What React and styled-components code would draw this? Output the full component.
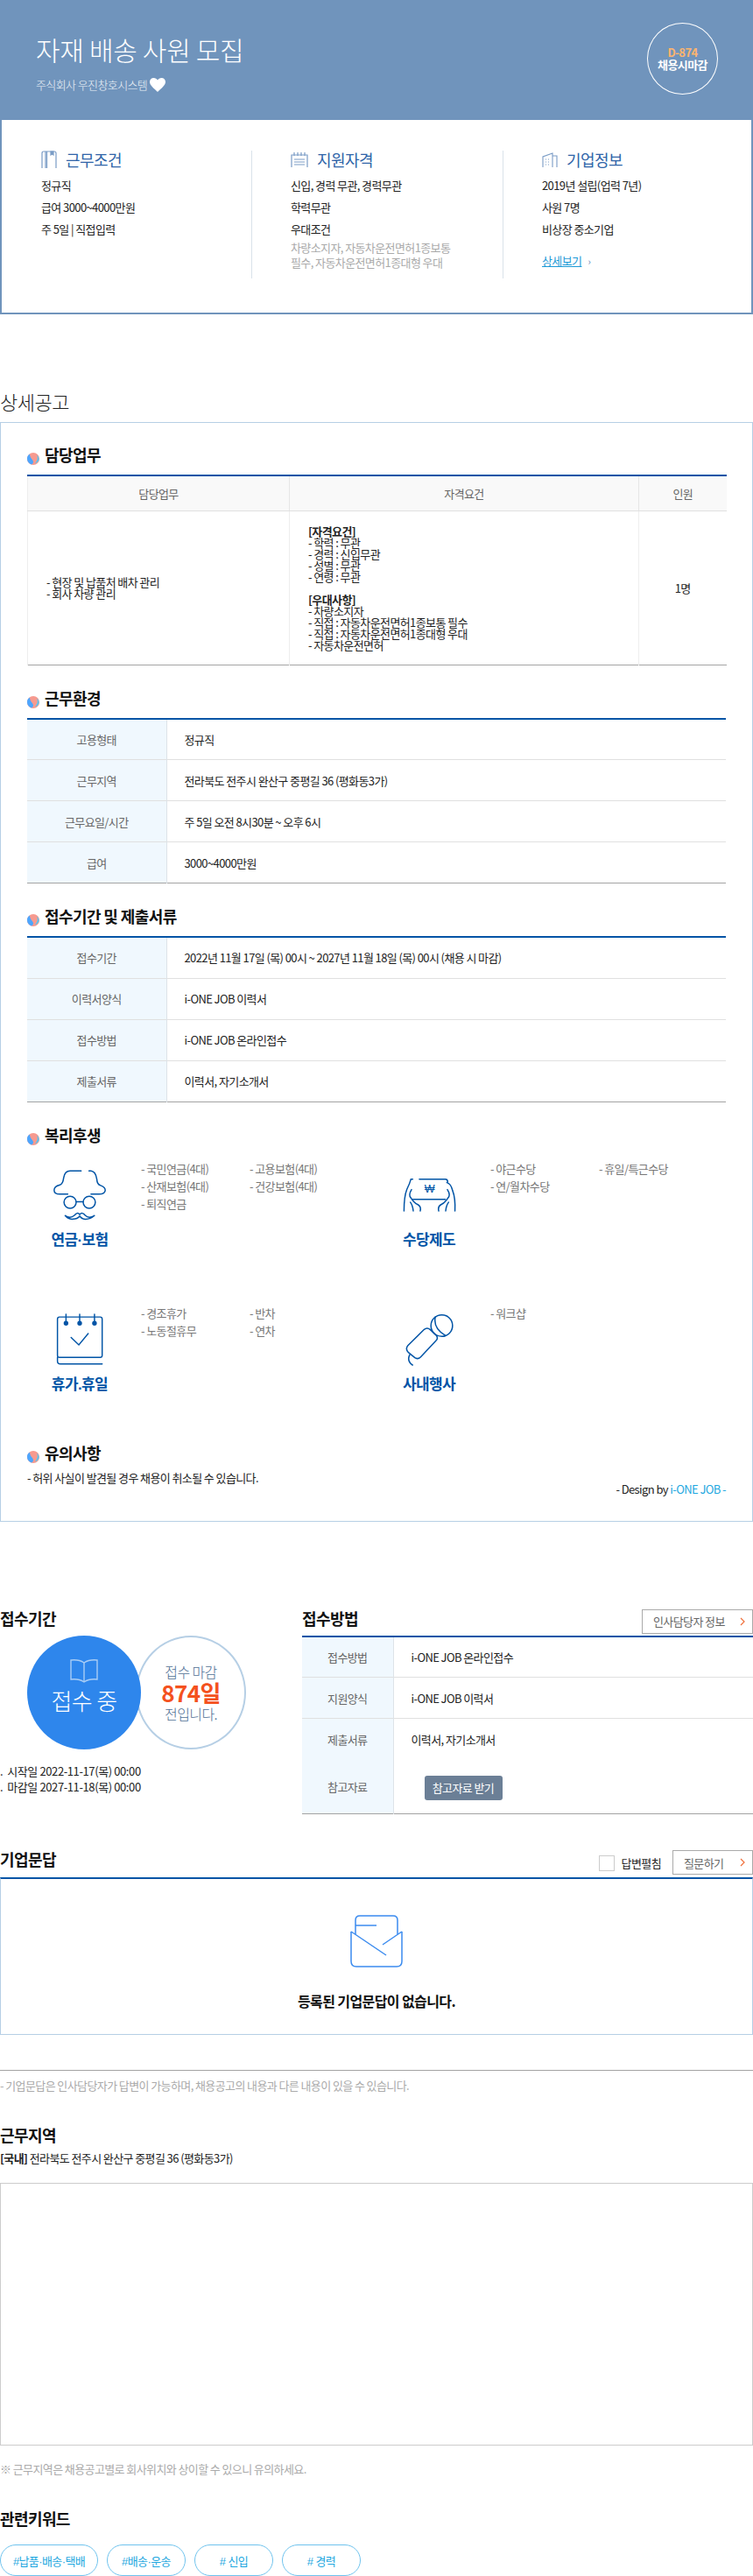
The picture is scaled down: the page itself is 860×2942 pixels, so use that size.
import React from 'react'
import styled, { createGlobalStyle } from 'styled-components'

const GlobalStyle = createGlobalStyle`
    * { box-sizing: border-box; }
    body {
        margin: 0;
        background: #fff;
        color: #222;
        font-family: "Noto Sans CJK KR", "Noto Sans", sans-serif;
        font-size: 13px;
        letter-spacing: -0.6px;
    }
`

const Page = styled.div`
    width: 860px;
    padding-bottom: 1px;
`

/* top banner */
const Banner = styled.div`
    height: 137px;
    background: #7094bc;
    color: #fff;
    padding: 38px 40px 0 41px;
    display: flex;
    justify-content: space-between;
    align-items: flex-start;
`

const Title = styled.h1`
    margin: 0;
    font-size: 30px;
    line-height: 36px;
    font-weight: 300;
    letter-spacing: -0.3px;
`

const Company = styled.div`
    margin-top: 13px;
    display: flex;
    align-items: center;
    gap: 3px;
    font-size: 13px;
    line-height: 20px;
    color: #eef3f8;
    font-weight: 300;
`

const Badge = styled.div`
    width: 81px;
    height: 82px;
    margin-top: -12px;
    border: 1px solid #fff;
    border-radius: 50%;
    display: flex;
    flex-direction: column;
    align-items: center;
    justify-content: center;
    font-size: 13px;
    line-height: 14px;
    font-weight: 700;
`

const BadgeDay = styled.span`
    color: #fdb46e;
`

/* summary card */
const Summary = styled.div`
    height: 222px;
    border: 2px solid #7094bc;
    border-top: 0;
    padding-top: 35px;
    display: grid;
    grid-template-columns: 285px 287px 1fr;
`

const SummaryCol = styled.div`
    height: 146px;
    padding-left: ${p => (p.$first ? '45px' : '44px')};
    border-left: ${p => (p.$first ? '0' : '1px solid #d9e2ea')};
`

const SummaryHead = styled.h3`
    margin: 0 0 7px;
    display: flex;
    align-items: center;
    gap: 10px;
    height: 20px;
    font-size: 18px;
    line-height: 20px;
    font-weight: 400;
    color: #2f64a8;
`

const SummaryRow = styled.div`
    font-size: 13px;
    line-height: 25px;
`

const SummaryGray = styled.div`
    font-size: 13px;
    line-height: 17px;
    color: #aaa;
`

const MoreLink = styled.a`
    display: inline-block;
    margin-top: 14px;
    font-size: 13px;
    line-height: 20px;
    color: #1d9ad6;
    text-decoration: underline;
`

const MoreArrow = styled.span`
    margin-left: 7px;
    color: #5b86b5;
    font-size: 11px;
`

/* detail panel */
const PageTitle = styled.h2`
    margin: 84px 0 9px;
    font-size: 22px;
    line-height: 30px;
    font-weight: 300;
    letter-spacing: -0.5px;
`

const Panel = styled.div`
    border: 1px solid #b6cfe5;
    padding: 23px 30px 28px;
`

const SectionHead = styled.h3`
    margin: ${p => (p.$first ? '0' : '24px')} 0 ${p => p.$mb || '10px'};
    display: flex;
    align-items: flex-end;
    gap: 6px;
    font-size: 18px;
    line-height: 26px;
    font-weight: 700;
    color: #111;
`

const PlainHead = styled.h3`
    margin: 0;
    font-size: 18px;
    line-height: 26px;
    font-weight: 700;
    color: #111;
`

const Table = styled.table`
    width: 100%;
    table-layout: fixed;
    border-collapse: collapse;
    border-top: 2px solid #0054a6;
    border-bottom: 1px solid #a3a3a3;
`

const Th = styled.th`
    width: ${p => p.$w || 'auto'};
    height: 40px;
    padding: 0;
    background: #f9f9f9;
    border-bottom: 1px solid #e0e0e0;
    border-left: ${p => (p.$first ? '1px solid #eee' : '1px solid #e6e6e6')};
    font-size: 13px;
    font-weight: 400;
    color: #666;
`

const Td = styled.td`
    height: 176px;
    padding: 0 0 0 ${p => p.$pad || '21px'};
    border-left: 1px solid #eee;
    font-size: 13px;
    line-height: 13px;
    text-align: ${p => p.$align || 'left'};
    white-space: pre-line;
`

const Strong = styled.strong`
    font-weight: 700;
`

const Row = styled.tr`
    height: ${p => p.$h || '47px'};
    & + & th, & + & td { border-top: 1px solid #e0e0e0; }
`

const Label = styled.th`
    width: ${p => p.$w || '159px'};
    padding: 0;
    background: #f0f8fe;
    border-right: 1px solid #dde3e8;
    font-size: 13px;
    font-weight: 400;
    color: #666;
`

const Value = styled.td`
    padding: 0 0 0 20px;
    font-size: 13px;
`

/* welfare */
const WelfareGrid = styled.div`
    margin-top: 16px;
    display: grid;
    grid-template-columns: 399px 399px;
    grid-auto-rows: 156px;
    row-gap: 9px;
`

const WelfareCell = styled.div`
    display: flex;
`

const WelfareSide = styled.div`
    width: 120px;
    flex: none;
`

const WelfareIcon = styled.div`
    height: 80px;
    display: flex;
    align-items: center;
    justify-content: center;
    color: #0054a6;
`

const WelfareName = styled.div`
    text-align: center;
    font-family: "Liberation Sans", "Noto Sans CJK KR", sans-serif;
    font-size: 17px;
    line-height: 24px;
    font-weight: 700;
    color: #0054a6;
`

const WelfareList = styled.ul`
    margin: 0 0 0 10px;
    padding: 0;
    list-style: none;
    display: grid;
    grid-template-columns: 124px 124px;
    grid-auto-rows: 20px;
    font-size: 13px;
    line-height: 20px;
    color: #777;
`

const NoteRow = styled.div`
    display: flex;
    justify-content: space-between;
    height: 29px;
`

const Note = styled.div`
    font-size: 13px;
    line-height: 16px;
`

const Credit = styled.div`
    align-self: flex-end;
    font-size: 13px;
    line-height: 16px;
`

const CreditMark = styled.span`
    color: #1ea7e0;
`

/* period + method */
const Split = styled.div`
    margin-top: 97px;
    display: flex;
`

const SplitLeft = styled.div`
    width: 345px;
    flex: none;
`

const SplitRight = styled.div`
    flex: 1;
`

const HeadBar = styled.div`
    height: 33px;
    display: flex;
    justify-content: space-between;
    align-items: flex-start;
`

const OutlineBtn = styled.button`
    width: ${p => p.$w};
    height: 28px;
    margin-top: 3px;
    padding: 0 8px 0 12px;
    display: flex;
    align-items: center;
    justify-content: space-between;
    background: #fff;
    border: 1px solid #aaa;
    font: inherit;
    font-size: 13px;
    letter-spacing: -0.6px;
    color: #666;
`

const Circles = styled.div`
    margin-left: 31px;
    display: flex;
`

const BlueCircle = styled.div`
    position: relative;
    z-index: 1;
    width: 130px;
    height: 130px;
    border-radius: 50%;
    background: #2e86ec;
    color: #fff;
    display: flex;
    flex-direction: column;
    align-items: center;
    padding-top: 27px;
    font-size: 26px;
    line-height: 36px;
    font-weight: 300;
`

const RingCircle = styled.div`
    width: 126px;
    height: 130px;
    margin-left: -6px;
    border: 2px solid #b6cfe5;
    border-radius: 50%;
    display: flex;
    flex-direction: column;
    align-items: center;
    justify-content: center;
    font-size: 16px;
    line-height: 22px;
    font-weight: 300;
    color: #4f6f95;
`

const DayCount = styled.div`
    font-size: 26px;
    line-height: 26px;
    font-weight: 700;
    color: #f4511e;
`

const Dates = styled.ul`
    margin: 16px 0 0;
    padding: 0;
    list-style: none;
    font-size: 13px;
    line-height: 18px;
    letter-spacing: -0.4px;
`

const DownloadBtn = styled.button`
    width: 89px;
    height: 28px;
    margin: 3px 0 0 15px;
    display: block;
    background: #6b7f96;
    border: 0;
    border-radius: 3px;
    color: #fff;
    font: inherit;
    font-size: 13px;
    letter-spacing: -0.6px;
    padding: 0;
`

/* q&a */
const QnaBar = styled.div`
    margin-top: 38px;
    height: 34px;
    display: flex;
    justify-content: space-between;
    align-items: flex-start;
`

const QnaTools = styled.div`
    display: flex;
    align-items: flex-start;
`

const CheckBox = styled.span`
    width: 18px;
    height: 18px;
    margin-top: 9px;
    border: 1px solid #ccc;
`

const CheckLabel = styled.span`
    margin: 8px 13px 0 8px;
    font-size: 13px;
    line-height: 20px;
`

const QnaBox = styled.div`
    height: 180px;
    border-top: 2px solid #0054a6;
    border-left: 1px solid #b6cfe5;
    border-right: 1px solid #b6cfe5;
    border-bottom: 1px solid #b6cfe5;
    padding-top: 41px;
    display: flex;
    flex-direction: column;
    align-items: center;
`

const EmptyText = styled.div`
    margin-top: 26px;
    font-size: 16px;
    line-height: 24px;
    font-weight: 700;
    color: #111;
`

const Divider = styled.hr`
    margin: 40px 0 0;
    border: 0;
    border-top: 1px solid #a3a3a3;
`

const GrayNote = styled.div`
    margin-top: ${p => p.$mt || '7px'};
    font-size: 13px;
    line-height: 20px;
    color: #aaa;
`

const LocationHead = styled(PlainHead)`
    margin-top: 33px;
`

const Address = styled.div`
    margin-top: 5px;
    font-size: 13px;
    line-height: 18px;
`

const MapBox = styled.div`
    height: 300px;
    margin-top: 19px;
    border: 1px solid #ccc;
`

const TagList = styled.div`
    margin-top: 17px;
    display: flex;
    gap: 10px;
`

const Tag = styled.a`
    width: ${p => p.$w || '90px'};
    height: 36px;
    border: 1px solid #6fc3ee;
    border-radius: 18px;
    display: flex;
    align-items: center;
    justify-content: center;
    font-family: "Liberation Sans", "Noto Sans CJK KR", sans-serif;
    font-size: 13px;
    color: #1ea7e0;
`

const DotSvg = styled.svg`
    flex: none;
    margin-bottom: 1px;
`

const BookSvg = styled.svg`
    flex: none;
    margin-bottom: 2px;
`

const Heart = () => (
    <svg width="18" height="16" viewBox="0 0 18 16">
        <path fill="#fff" d="M9 16C5 12 0 8.500 0 4.500 0 1.800 2 0 4.500 0 6.500 0 8 1 9 2.500 10 1 11.500 0 13.500 0 16 0 18 1.800 18 4.500 18 8.500 13 12 9 16Z" />
    </svg>
)

const Dot = () => (
    <DotSvg width="14" height="14" viewBox="0 0 14 14">
        <circle cx="7" cy="7" r="7" fill="#f79a8f" />
        <path fill="#4da6ff" d="M3 1.500C0.500 3 0 5 0 7c0 3 2 5.500 5 6.500 1-.5 2-1.500 2-3 0-2-2-3-3-5C3.500 4 3 3 3 1.500Z" />
        <path fill="#58c4f0" d="M11 2.500c1 2 1 4.500 0 6.500l-2 3.500c2-1 3.500-2 4.500-4C14 6 13 4 11 2.500Z" />
    </DotSvg>
)

const DoorIcon = () => (
    <svg width="18" height="20" viewBox="0 0 18 20" fill="none" stroke="#7a9cc6" strokeWidth="1.200">
        <path d="M1 20V3q0-2 2-2h12q2 0 2 2v17" />
        <path d="M5 1v19M6.500 1v19" />
        <path d="M11 1h3v4l-1.500-1-1.500 1z" fill="#7a9cc6" />
    </svg>
)

const NoteIcon = () => (
    <svg width="20" height="17" viewBox="0 0 20 17" fill="none" stroke="#7a9cc6" strokeWidth="1.200">
        <path d="M1 17V3h18v14" />
        <path d="M4 0v4M8 0v4M12 0v4M16 0v4" />
        <path d="M4 8h12M4 11h12M4 14h12" />
    </svg>
)

const BuildingIcon = () => (
    <svg width="18" height="17" viewBox="0 0 18 17" fill="none" stroke="#7a9cc6" strokeWidth="1.100">
        <path d="M1 17V5l11-4v16" />
        <path d="M12 4h5v13" />
        <path d="M4 8h1M7 8h1M4 11h1M7 11h1M4 14h1M7 14h1" />
    </svg>
)

const HatIcon = () => (
    <svg width="62" height="59" viewBox="120 105 186 178" fill="none" stroke="currentColor" strokeWidth="4.500" strokeLinecap="round">
        <path d="M218 112H180Q162 112 158 135 155 158 145 160 125 165 125 178 125 192 145 192H172" />
        <path d="M245 112H252Q268 114 272 140 273 158 285 162 302 168 301 180 298 192 280 192H252" />
        <circle cx="180" cy="220" r="21" />
        <circle cx="246" cy="220" r="21" />
        <path d="M201 218H225" />
        <path d="M162 265Q180 278 195 265 205 252 213 262 222 252 232 265 245 278 265 265 248 280 228 278 218 275 213 268 205 278 190 278 175 280 162 265Z" />
    </svg>
)

const HandsIcon = () => (
    <svg width="61" height="39" viewBox="58 105 184 118" fill="none" stroke="currentColor" strokeWidth="4.500" strokeLinecap="round">
        <path d="M115 110H205Q213 110 213 120" />
        <path d="M92 180H205" />
        <path d="M92 110H86Q82 125 72 145 62 170 62 220" />
        <path d="M210 122 Q224 125 230 150 240 175 238 220" />
        <path d="M88 146 Q76 165 86 175 96 192 110 198 122 205 118 220 M94 220 Q92 200 84 190" />
        <path d="M212 146 Q224 165 214 175 204 192 190 198 178 205 182 220 M206 220 Q208 200 216 190" />
        <text x="150" y="157" textAnchor="middle" fontSize="38" fill="currentColor" stroke="none" fontFamily="Liberation Sans, sans-serif">₩</text>
    </svg>
)

const CalendarIcon = () => (
    <svg width="54" height="59" viewBox="100 58 166 180" fill="none" stroke="currentColor" strokeWidth="4.500" strokeLinecap="round">
        <rect x="105" y="70" width="157" height="142" rx="7" />
        <path d="M105 212V225Q105 235 115 235H262" />
        <path d="M135 60V92M183 60V92M235 60V92" />
        <circle cx="135" cy="92" r="6" fill="currentColor" />
        <circle cx="183" cy="92" r="6" fill="currentColor" />
        <circle cx="235" cy="92" r="6" fill="currentColor" />
        <path d="M153 142 180 168 213 128" />
    </svg>
)

const MicIcon = () => (
    <svg width="57" height="60" viewBox="65 58 170 180" fill="none" stroke="currentColor" strokeWidth="4.500" strokeLinecap="round">
        <circle cx="192" cy="100" r="37" />
        <path d="M170 70Q162 110 205 134" />
        <path d="M132 113Q142 105 152 113L172 132Q182 142 172 152L120 207Q110 217 100 210L78 192Q66 180 76 168Z" />
        <path d="M82 200Q72 222 92 235" />
    </svg>
)

const BookIcon = () => (
    <BookSvg width="32" height="27" viewBox="0 0 32 27" fill="none" stroke="#a9cdf5" strokeWidth="1.400">
        <path d="M16 4Q10 0 1 1V23Q10 22 16 26Q22 22 31 23V1Q22 0 16 4Z" />
        <path d="M16 4V26" />
    </BookSvg>
)

const LetterIcon = () => (
    <svg width="60" height="60" viewBox="0 0 60 60" fill="none" stroke="#3b8bef" strokeWidth="1.500">
        <path d="M6 22V6Q6 1 11 1H49Q54 1 54 6V22" />
        <path d="M6 12H30" />
        <path d="M1 19V53Q1 59 7 59H53Q59 59 59 53V19" />
        <path d="M1 19 41 46" />
        <path d="M59 19 37 34" />
    </svg>
)

const Chevron = () => (
    <svg width="6" height="10" viewBox="0 0 6 10" fill="none" stroke="#f0703c" strokeWidth="1.200">
        <path d="M1 1l4 4-4 4" />
    </svg>
)

const envRows = [
    ['고용형태', '정규직'],
    ['근무지역', '전라북도 전주시 완산구 중평길 36 (평화동3가)'],
    ['근무요일/시간', '주 5일 오전 8시30분 ~ 오후 6시'],
    ['급여', '3000~4000만원'],
]

const docRows = [
    ['접수기간', '2022년 11월 17일 (목) 00시 ~ 2027년 11월 18일 (목) 00시 (채용 시 마감)'],
    ['이력서양식', 'i-ONE JOB 이력서'],
    ['접수방법', 'i-ONE JOB 온라인접수'],
    ['제출서류', '이력서, 자기소개서'],
]

const welfare = [
    { name: '연금·보험', Icon: HatIcon, items: ['국민연금(4대)', '고용보험(4대)', '산재보험(4대)', '건강보험(4대)', '퇴직연금'] },
    { name: '수당제도', Icon: HandsIcon, items: ['야근수당', '휴일/특근수당', '연/월차수당'] },
    { name: '휴가.휴일', Icon: CalendarIcon, items: ['경조휴가', '반차', '노동절휴무', '연차'] },
    { name: '사내행사', Icon: MicIcon, items: ['워크샵'] },
]

const InfoTable = ({ rows }) => (
    <Table>
        <tbody>
            {rows.map(([label, value]) => (
                <Row key={label}>
                    <Label>{label}</Label>
                    <Value>{value}</Value>
                </Row>
            ))}
        </tbody>
    </Table>
)

const App = () => {
    return (
        <Page>
            <GlobalStyle />
            <Banner>
                <div>
                    <Title>자재 배송 사원 모집</Title>
                    <Company>주식회사 우진창호시스템 <Heart /></Company>
                </div>
                <Badge>
                    <BadgeDay>D-874</BadgeDay>
                    <span>채용시마감</span>
                </Badge>
            </Banner>
            <Summary>
                <SummaryCol $first>
                    <SummaryHead><DoorIcon />근무조건</SummaryHead>
                    <SummaryRow>정규직</SummaryRow>
                    <SummaryRow>급여 3000~4000만원</SummaryRow>
                    <SummaryRow>주 5일 | 직접입력</SummaryRow>
                </SummaryCol>
                <SummaryCol>
                    <SummaryHead><NoteIcon />지원자격</SummaryHead>
                    <SummaryRow>신입, 경력 무관, 경력무관</SummaryRow>
                    <SummaryRow>학력무관</SummaryRow>
                    <SummaryRow>우대조건</SummaryRow>
                    <SummaryGray>차량소지자, 자동차운전면허1종보통</SummaryGray>
                    <SummaryGray>필수, 자동차운전면허1종대형 우대</SummaryGray>
                </SummaryCol>
                <SummaryCol>
                    <SummaryHead><BuildingIcon />기업정보</SummaryHead>
                    <SummaryRow>2019년 설립(업력 7년)</SummaryRow>
                    <SummaryRow>사원 7명</SummaryRow>
                    <SummaryRow>비상장 중소기업</SummaryRow>
                    <MoreLink>상세보기</MoreLink><MoreArrow>›</MoreArrow>
                </SummaryCol>
            </Summary>

            <PageTitle>상세공고</PageTitle>
            <Panel>
                <SectionHead $first><Dot />담당업무</SectionHead>
                <Table>
                    <thead>
                        <tr>
                            <Th $first $w="299px">담당업무</Th>
                            <Th $w="399px">자격요건</Th>
                            <Th $w="100px">인원</Th>
                        </tr>
                    </thead>
                    <tbody>
                        <tr>
                            <Td>{'- 현장 및 납품처 배차 관리\n- 회사 차량 관리'}</Td>
                            <Td>
                                <Strong>[자격요건]</Strong>
                                {'\n- 학력 : 무관\n- 경력 : 신입무관\n- 성별 : 무관\n- 연령 : 무관\n\n'}
                                <Strong>[우대사항]</Strong>
                                {'\n- 차량소지자\n- 직접 : 자동차운전면허1종보통 필수\n- 직접 : 자동차운전면허1종대형 우대\n- 자동차운전면허'}
                            </Td>
                            <Td $align="center" $pad="0">1명</Td>
                        </tr>
                    </tbody>
                </Table>

                <SectionHead><Dot />근무환경</SectionHead>
                <InfoTable rows={envRows} />

                <SectionHead><Dot />접수기간 및 제출서류</SectionHead>
                <InfoTable rows={docRows} />

                <SectionHead $mb="0"><Dot />복리후생</SectionHead>
                <WelfareGrid>
                    {welfare.map(({ name, Icon, items }) => (
                        <WelfareCell key={name}>
                            <WelfareSide>
                                <WelfareIcon><Icon /></WelfareIcon>
                                <WelfareName>{name}</WelfareName>
                            </WelfareSide>
                            <div>
                                <WelfareList>
                                    {items.map(item => <li key={item}>- {item}</li>)}
                                </WelfareList>
                            </div>
                        </WelfareCell>
                    ))}
                </WelfareGrid>

                <SectionHead $first $mb="8px"><Dot />유의사항</SectionHead>
                <NoteRow>
                    <Note>- 허위 사실이 발견될 경우 채용이 취소될 수 있습니다.</Note>
                    <Credit>- Design by <CreditMark>i-ONE JOB -</CreditMark></Credit>
                </NoteRow>
            </Panel>

            <Split>
                <SplitLeft>
                    <HeadBar><PlainHead>접수기간</PlainHead></HeadBar>
                    <Circles>
                        <BlueCircle>
                            <BookIcon />
                            접수 중
                        </BlueCircle>
                        <RingCircle>
                            <span>접수 마감</span>
                            <DayCount>874일</DayCount>
                            <span>전입니다.</span>
                        </RingCircle>
                    </Circles>
                    <Dates>
                        <li>. &nbsp;시작일 2022-11-17(목) 00:00</li>
                        <li>. &nbsp;마감일 2027-11-18(목) 00:00</li>
                    </Dates>
                </SplitLeft>
                <SplitRight>
                    <HeadBar>
                        <PlainHead>접수방법</PlainHead>
                        <OutlineBtn $w="127px">인사담당자 정보<Chevron /></OutlineBtn>
                    </HeadBar>
                    <Table>
                        <tbody>
                            <Row>
                                <Label $w="104px">접수방법</Label>
                                <Value>i-ONE JOB 온라인접수</Value>
                            </Row>
                            <Row>
                                <Label $w="104px">지원양식</Label>
                                <Value>i-ONE JOB 이력서</Value>
                            </Row>
                            <Row>
                                <Label $w="104px">제출서류</Label>
                                <Value>이력서, 자기소개서</Value>
                            </Row>
                            <Row $h="62px">
                                <Label $w="104px">참고자료</Label>
                                <Value><DownloadBtn>참고자료 받기</DownloadBtn></Value>
                            </Row>
                        </tbody>
                    </Table>
                </SplitRight>
            </Split>

            <QnaBar>
                <PlainHead>기업문답</PlainHead>
                <QnaTools>
                    <CheckBox />
                    <CheckLabel>답변펼침</CheckLabel>
                    <OutlineBtn $w="92px">질문하기<Chevron /></OutlineBtn>
                </QnaTools>
            </QnaBar>
            <QnaBox>
                <LetterIcon />
                <EmptyText>등록된 기업문답이 없습니다.</EmptyText>
            </QnaBox>
            <Divider />
            <GrayNote>- 기업문답은 인사담당자가 답변이 가능하며, 채용공고의 내용과 다른 내용이 있을 수 있습니다.</GrayNote>

            <LocationHead>근무지역</LocationHead>
            <Address><Strong>[국내]</Strong> 전라북도 전주시 완산구 중평길 36 (평화동3가)</Address>
            <MapBox />
            <GrayNote $mt="17px">※ 근무지역은 채용공고별로 회사위치와 상이할 수 있으니 유의하세요.</GrayNote>

            <LocationHead>관련키워드</LocationHead>
            <TagList>
                <Tag $w="112px">#납품·배송·택배</Tag>
                <Tag>#배송·운송</Tag>
                <Tag># 신입</Tag>
                <Tag># 경력</Tag>
            </TagList>
        </Page>
    )
}

export default App
